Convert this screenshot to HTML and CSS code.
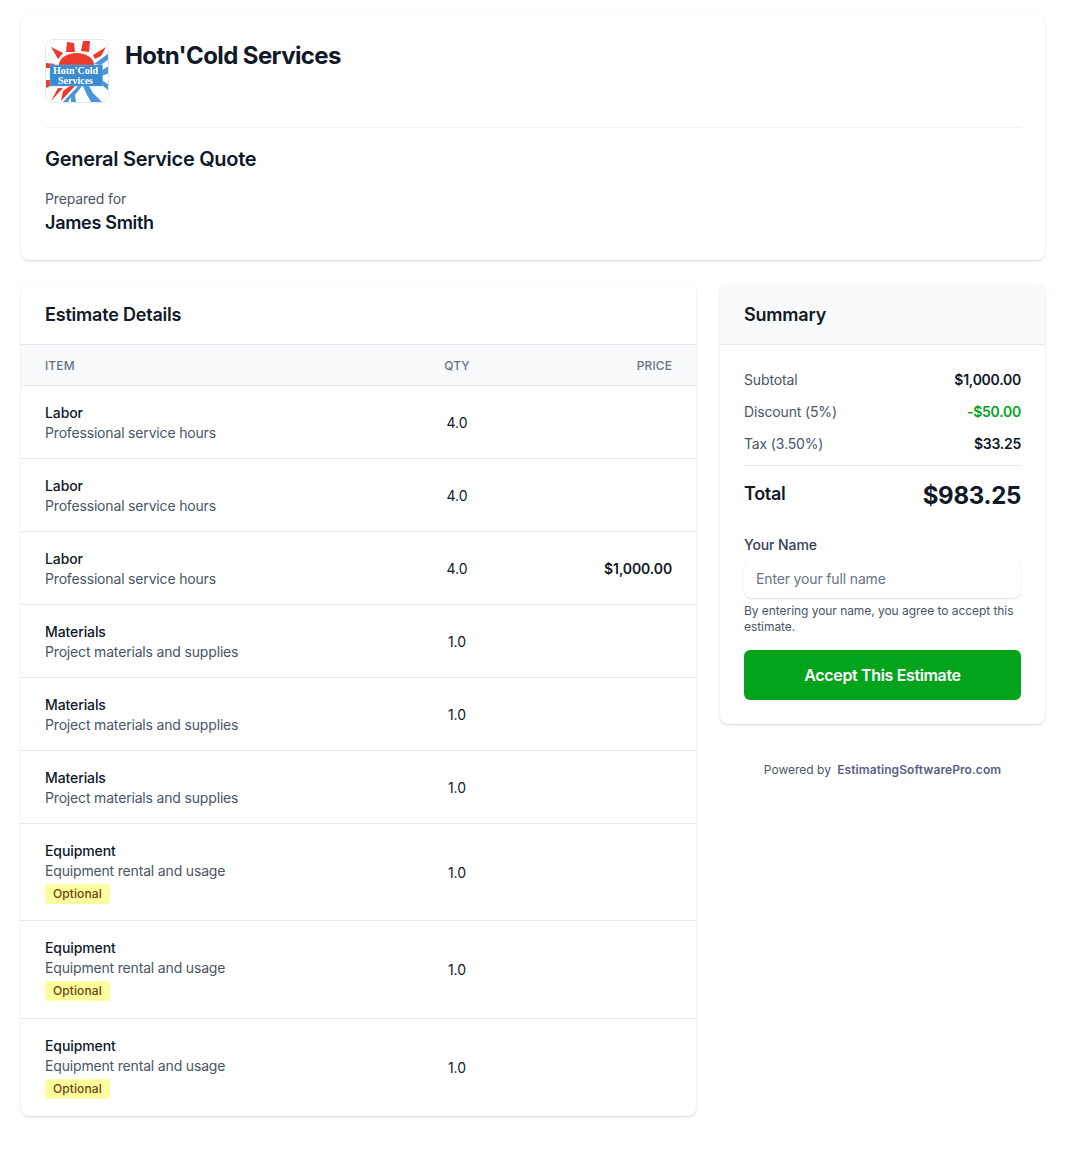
FILE: index.html
```html
<!DOCTYPE html>
<html lang="en">
<head>
  <meta charset="UTF-8">
  <meta name="viewport" content="width=device-width, initial-scale=1.0">
  <title>General Service Quote</title>
  <link rel="stylesheet" href="styles.css">
</head>
<body>
  <div class="page">
    <div class="card header-card">
      <div class="brand">
        <svg class="logo" viewBox="0 0 64 64" width="64" height="64">
          <rect width="64" height="64" rx="8" fill="#fff"/>
          <!-- sun rays -->
          <polygon points="22,3 29,4 30,13 21,13" fill="#ee3a2c"/>
          <polygon points="38,2 45,2 44,13 36,12" fill="#ee3a2c"/>
          <polygon points="6,8 18,14 13,20" fill="#ee3a2c"/>
          <polygon points="48,16 61,8 56,17 50,20" fill="#ee3a2c"/>
          <polygon points="1,24 10,25 5,29 1,29" fill="#ee3a2c"/>
          <polygon points="1,41 5,41 5,47 1,49" fill="#ee3a2c"/>
          <polygon points="6,62 13,49 18,49" fill="#ee3a2c"/>
          <polygon points="18,52 25,47 30,47 16,62" fill="#ee3a2c"/>
          <path d="M14 26a17.500 12 0 0 1 35 0z" fill="#ee3a2c"/>
          <!-- snowflake side -->
          <polygon points="49,25 64,14 64,20 56,26" fill="#4a98dc"/>
          <polygon points="57,31 64,27 64,34 57,37" fill="#4a98dc"/>
          <polygon points="57,41 64,46 64,52 57,46" fill="#4a98dc"/>
          <polygon points="18,63 33,47 37,47 30,56 31,63 26,63 26,58 23,63" fill="#4a98dc"/>
          <polygon points="38,47 44,47 48,54 57,63 46,63 41,54" fill="#4a98dc"/>
          <rect x="5" y="26" width="52.500" height="21" fill="#3a8bd0" stroke="#6fb0e6" stroke-width="0.500"/>
          <text x="30.500" y="35" class="logo-text">Hotn'Cold</text>
          <text x="30.500" y="45" class="logo-text">Services</text>
          <rect x="0.500" y="0.500" width="63" height="63" rx="7.500" fill="none" stroke="#e5e7eb"/>
        </svg>
        <h1 class="company">Hotn'Cold Services</h1>
      </div>
      <h2 class="quote-title">General Service Quote</h2>
      <div class="prepared">Prepared for</div>
      <div class="client">James Smith</div>
    </div>

    <div class="columns">
      <div class="card details">
        <h3 class="card-title">Estimate Details</h3>
        <table class="items">
          <thead>
            <tr><th>Item</th><th class="qty">Qty</th><th class="price">Price</th></tr>
          </thead>
          <tbody>
            <tr><td><div class="name">Labor</div><div class="desc">Professional service hours</div></td><td class="qty">4.0</td><td class="price"></td></tr>
            <tr><td><div class="name">Labor</div><div class="desc">Professional service hours</div></td><td class="qty">4.0</td><td class="price"></td></tr>
            <tr><td><div class="name">Labor</div><div class="desc">Professional service hours</div></td><td class="qty">4.0</td><td class="price">$1,000.00</td></tr>
            <tr><td><div class="name">Materials</div><div class="desc">Project materials and supplies</div></td><td class="qty">1.0</td><td class="price"></td></tr>
            <tr><td><div class="name">Materials</div><div class="desc">Project materials and supplies</div></td><td class="qty">1.0</td><td class="price"></td></tr>
            <tr><td><div class="name">Materials</div><div class="desc">Project materials and supplies</div></td><td class="qty">1.0</td><td class="price"></td></tr>
            <tr><td><div class="name">Equipment</div><div class="desc">Equipment rental and usage</div><span class="badge">Optional</span></td><td class="qty">1.0</td><td class="price"></td></tr>
            <tr><td><div class="name">Equipment</div><div class="desc">Equipment rental and usage</div><span class="badge">Optional</span></td><td class="qty">1.0</td><td class="price"></td></tr>
            <tr><td><div class="name">Equipment</div><div class="desc">Equipment rental and usage</div><span class="badge">Optional</span></td><td class="qty">1.0</td><td class="price"></td></tr>
          </tbody>
        </table>
      </div>

      <div class="side">
        <div class="card summary">
          <h3 class="card-title shaded">Summary</h3>
          <div class="summary-body">
            <div class="line"><span class="label">Subtotal</span><span class="value">$1,000.00</span></div>
            <div class="line"><span class="label">Discount (5%)</span><span class="value green">-$50.00</span></div>
            <div class="line last"><span class="label">Tax (3.50%)</span><span class="value">$33.25</span></div>
            <div class="total"><span class="total-label">Total</span><span class="total-value">$983.25</span></div>
            <label class="field-label" for="fullName">Your Name</label>
            <input class="field" id="fullName" type="text" placeholder="Enter your full name">
            <p class="hint">By entering your name, you agree to accept this estimate.</p>
            <button class="accept">Accept This Estimate</button>
          </div>
        </div>
        <div class="powered">Powered by <a href="#">EstimatingSoftwarePro.com</a></div>
      </div>
    </div>
  </div>
</body>
</html>
```

FILE: styles.css
```css
* {
  box-sizing: border-box;
}

body {
  margin: 0;
  background: #fff;
  color: #111827;
  font-family: Inter, "Liberation Sans", sans-serif;
}

.page {
  width: 1024px;
  margin-left: 21px;
  padding: 15px 0 44px;
}

.card {
  background: #fff;
  border-radius: 8px;
  box-shadow: 0 1px 3px rgba(0, 0, 0, 0.1), 0 1px 2px rgba(0, 0, 0, 0.06);
  overflow: hidden;
}

.header-card {
  padding: 24px 24px 23px;
}

.brand {
  display: flex;
  gap: 16px;
  padding-bottom: 24px;
  border-bottom: 1px solid #f3f4f6;
}

.logo {
  border-radius: 8px;
  flex: none;
}

.logo-text {
  font-family: "Liberation Serif", serif;
  font-size: 10px;
  font-weight: 700;
  fill: #fff;
  text-anchor: middle;
}

.company {
  margin: 1px 0 0;
  font-size: 24px;
  line-height: 32px;
  font-weight: 700;
  letter-spacing: -0.6px;
}

.quote-title {
  margin: 19px 0 0;
  font-size: 20px;
  line-height: 24px;
  font-weight: 600;
  letter-spacing: -0.3px;
}

.prepared {
  margin-top: 18px;
  font-size: 14px;
  line-height: 20px;
  color: #4b5563;
  letter-spacing: -0.15px;
}

.client {
  font-size: 18px;
  line-height: 28px;
  font-weight: 600;
  letter-spacing: -0.3px;
}

.columns {
  display: grid;
  grid-template-columns: 1fr 325px;
  gap: 24px;
  align-items: start;
  margin-top: 24px;
}

.card-title {
  margin: 0;
  padding: 19px 24px 17px;
  font-size: 18px;
  line-height: 24px;
  font-weight: 600;
  letter-spacing: -0.2px;
  border-bottom: 1px solid #e5e7eb;
}

.details .card-title {
  border-bottom: 0;
}

.shaded {
  background: #f9fafb;
}

.items {
  width: 100%;
  border-collapse: collapse;
  table-layout: fixed;
  font-size: 14px;
}

.items th {
  height: 41px;
  padding: 0 24px;
  background: #f9fafb;
  border-top: 1px solid #e5e7eb;
  border-bottom: 1px solid #e5e7eb;
  color: #6b7280;
  font-size: 12px;
  font-weight: 500;
  letter-spacing: 0.1px;
  text-transform: uppercase;
  text-align: left;
}

.items th:nth-child(2) {
  width: 120px;
}

.items th:nth-child(3) {
  width: 179px;
}

.items td {
  padding: 17px 24px 15px;
  border-bottom: 1px solid #e5e7eb;
  line-height: 20px;
  vertical-align: middle;
}

.items tr:last-child td {
  border-bottom-color: transparent;
}

.items .qty {
  padding-left: 0;
  padding-right: 0;
  text-align: center;
}

.items .price {
  text-align: right;
  font-weight: 600;
  letter-spacing: -0.12px;
}

.items th.price {
  font-weight: 500;
  letter-spacing: 0.1px;
}

.name {
  font-weight: 500;
  letter-spacing: -0.1px;
}

.desc {
  color: #4b5563;
  letter-spacing: -0.17px;
}

.badge {
  display: inline-block;
  margin: 3px 0 1.33px;
  padding: 0 8px;
  border-radius: 4px;
  background: #fbfd9e;
  color: #713f12;
  font-size: 12px;
  line-height: 20px;
  font-weight: 500;
  letter-spacing: 0.1px;
  vertical-align: top;
}

.summary-body {
  padding: 25px 24px 24px;
}

.line {
  display: flex;
  justify-content: space-between;
  font-size: 14px;
  line-height: 20px;
  margin-bottom: 12px;
}

.line.last {
  margin-bottom: 11px;
}

.label {
  color: #4b5563;
  letter-spacing: -0.15px;
}

.value {
  font-weight: 600;
  letter-spacing: -0.25px;
}

.green {
  color: #03a41c;
}

.total {
  display: flex;
  justify-content: space-between;
  align-items: flex-start;
  border-top: 1px solid #e5e7eb;
  padding-top: 14px;
}

.total-label {
  font-size: 18px;
  line-height: 28px;
  font-weight: 600;
  letter-spacing: -0.3px;
}

.total-value {
  font-size: 24px;
  line-height: 32px;
  font-weight: 700;
  letter-spacing: -0.3px;
}

.field-label {
  display: block;
  margin-top: 23px;
  font-size: 14px;
  line-height: 20px;
  font-weight: 500;
  letter-spacing: -0.1px;
  color: #374151;
}

.field {
  display: block;
  width: 100%;
  height: 39px;
  margin-top: 4px;
  padding: 0 12px;
  border: 0;
  border-radius: 8px;
  background: #fff;
  box-shadow: 0 1px 2px rgba(0, 0, 0, 0.12), 0 0 1px rgba(0, 0, 0, 0.06);
  font-family: inherit;
  font-size: 14px;
  letter-spacing: -0.15px;
  outline: none;
}

.field::placeholder {
  color: #6b7280;
}

.hint {
  margin: 5px 0 0;
  font-size: 12px;
  line-height: 16px;
  letter-spacing: -0.05px;
  color: #4b5563;
}

.accept {
  display: block;
  width: 100%;
  height: 50px;
  margin-top: 15px;
  border: 0;
  border-radius: 6px;
  background: #03a41c;
  color: #fff;
  font-family: inherit;
  font-size: 16px;
  font-weight: 600;
  letter-spacing: -0.35px;
  cursor: pointer;
}

.powered {
  margin-top: 38px;
  text-align: center;
  font-size: 12px;
  line-height: 16px;
  color: #4b5563;
}

.powered a {
  margin-left: 3px;
  color: #5a5e85;
  font-weight: 600;
  letter-spacing: 0.08px;
  text-decoration: none;
}
```
